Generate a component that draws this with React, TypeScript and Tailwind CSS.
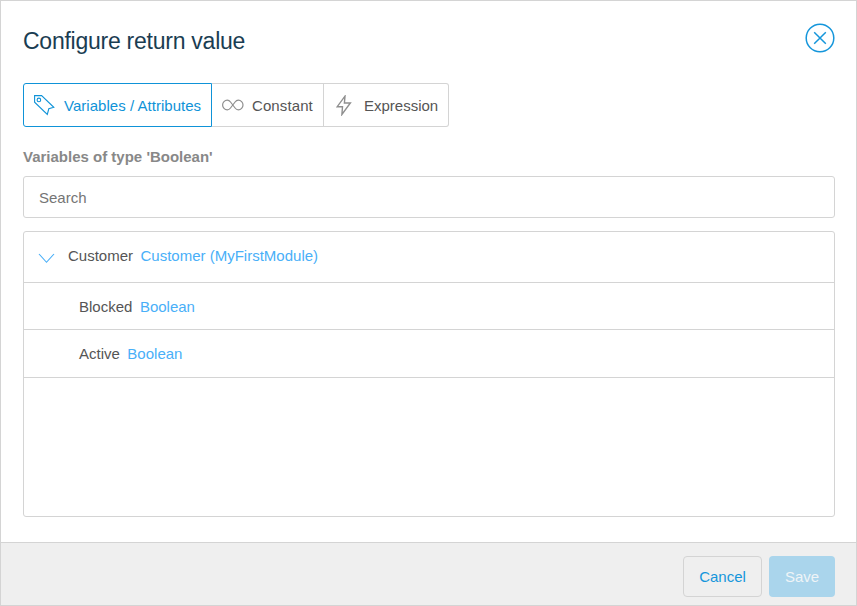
import React, { useState } from 'react';

const TagIcon = () => (
  <svg width="21" height="21" viewBox="0 0 21 21" fill="none" stroke="currentColor" strokeWidth="1.1">
    <path d="M.6.6H7.6L19.800 12.300 14.800 13.800 13.300 19.400.6 7.2Z" />
    <circle cx="4.900" cy="4.900" r="1.800" />
  </svg>
);

const InfinityIcon = () => (
  <svg width="22" height="12" viewBox="0 0 22 12" fill="none" stroke="currentColor" strokeWidth="1.200">
    <path d="M10.800 6 8.500 3C7.600 1.800 6.500 1.200 5.300 1.200A4.700 4.800 0 0 0 5.300 10.800C6.500 10.800 7.600 10.200 8.500 9L13.100 3C14 1.800 15.100 1.200 16.300 1.200A4.700 4.800 0 0 1 16.300 10.800C15.100 10.800 14 10.200 13.100 9Z" />
  </svg>
);

const BoltIcon = () => (
  <svg width="16" height="21" viewBox="0 0 16 21" fill="none" stroke="currentColor" strokeWidth="1.400">
    <path d="M9 1.200 1.200 11.700H6.500L5.900 19.500 14.400 8H8.400Z" />
  </svg>
);

const CloseIcon = () => (
  <svg width="30" height="30" viewBox="0 0 30 30" fill="none" stroke="currentColor" strokeWidth="1.500">
    <circle cx="15" cy="15" r="13.800" />
    <path d="M9.200 9.200 20.800 20.800M20.800 9.200 9.200 20.800" />
  </svg>
);

const rows = [
  { name: 'Blocked', type: 'Boolean', height: 'h-[47px]' },
  { name: 'Active', type: 'Boolean', height: 'h-12' },
];

export default function App() {
  const [query, setQuery] = useState('');
  return (
    <div className="flex h-[606px] w-[857px] flex-col border border-[#d4d4d4] bg-white font-['Liberation_Sans',Arial,sans-serif] text-[15px] text-[#555]">
      <main className="flex flex-1 flex-col pr-[21px] pl-[22px]">
        <header className="flex h-[82px] items-start justify-between">
          <h1 className="mt-[22px] text-[23px] leading-9 tracking-[-0.25px] text-[#1a3d52]">Configure return value</h1>
          <button aria-label="Close" className="mt-[22px] text-[#1596db]"><CloseIcon /></button>
        </header>

        <div className="flex h-11">
          <button className="flex w-[189px] items-center rounded-l-[3px] border border-[#0f93d8] pl-[10px] text-[#0f93d8]">
            <TagIcon /><span className="ml-[9px] pt-0.5 tracking-[0.03px] whitespace-nowrap">Variables / Attributes</span>
          </button>
          <button className="flex w-[112px] items-center border-y border-r border-[#d4d4d4] pl-[10px]">
            <span className="text-[#8f8f8f]"><InfinityIcon /></span><span className="ml-[8px] pt-0.5 tracking-[0.1px]">Constant</span>
          </button>
          <button className="flex w-[125px] items-center rounded-r-[3px] border-y border-r border-[#d4d4d4] pl-3">
            <span className="text-[#8f8f8f]"><BoltIcon /></span><span className="ml-3 pt-0.5">Expression</span>
          </button>
        </div>

        <h2 className="mt-5 h-[29px] leading-5 font-bold text-[#888]">Variables of type 'Boolean'</h2>
        <input
          className="h-[42px] rounded-[3px] border border-[#d4d4d4] px-[15px] outline-none placeholder:text-[#757575]"
          placeholder="Search"
          value={query}
          onChange={(e) => setQuery(e.target.value)}
        />

        <div className="mt-[13px] h-[286px] rounded-[3px] border border-[#d4d4d4]">
          <div className="flex h-[51px] items-center border-b border-[#d4d4d4] pb-0.5 pl-[14px]">
            <svg className="mt-1" width="17" height="11" viewBox="0 0 17 11" fill="none" stroke="#49aff8" strokeWidth="1.100">
              <path d="M1 1 8.500 9.300 16 1" />
            </svg>
            <span className="ml-[13px]">Customer</span>
            <span className="ml-[7.5px] text-[#49aff8]">Customer (MyFirstModule)</span>
          </div>
          {rows.map((row) => (
            <div key={row.name} className={`flex items-center border-b border-[#d4d4d4] pt-0.5 pl-[55px] ${row.height}`}>
              <span>{row.name}</span>
              <span className="ml-[7.5px] text-[#49aff8]">{row.type}</span>
            </div>
          ))}
        </div>
      </main>

      <footer className="flex h-[63px] items-start justify-end gap-[7px] border-t border-[#d4d4d4] bg-[#efefef] pt-[13px] pr-[21px]">
        <button className="h-[41px] w-[79px] rounded-[4px] border border-[#d4d4d4] pt-0.5 text-[#1596db]">Cancel</button>
        <button className="h-[41px] w-[66px] rounded-[4px] bg-[#aad5ec] pt-0.5 text-[#eff4f7]">Save</button>
      </footer>
    </div>
  );
}
